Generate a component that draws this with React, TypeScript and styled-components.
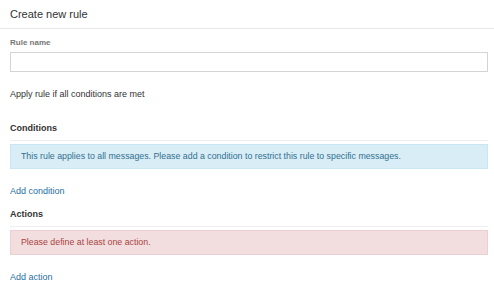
import * as React from "react";
import styled, { createGlobalStyle } from "styled-components";

const GlobalStyle = createGlobalStyle`
  html, body {
    margin: 0;
    padding: 0;
    background: #fff;
  }
  body {
    font-family: "Liberation Sans", Arial, sans-serif;
    color: #333;
  }
`;

const Page = styled.div`
  width: 494px;
  height: 298px;
  overflow: hidden;
`;

const Header = styled.div`
  height: 28px;
  line-height: 28px;
  padding: 0 10px;
  font-size: 11px;
  color: #333;
  border-bottom: 1px solid #e8e8e8;
`;

const Body = styled.div`
  padding: 0 6px 0 10px;
`;

const Label = styled.div`
  margin-top: 8px;
  font-size: 8px;
  line-height: 12px;
  font-weight: bold;
  color: #777;
`;

const Input = styled.input`
  display: block;
  box-sizing: border-box;
  width: 100%;
  height: 20px;
  margin: 3px 0 0;
  padding: 0 6px;
  border: 1px solid #d4d4d4;
  border-radius: 0;
  outline: none;
  font: inherit;
  font-size: 9px;
`;

const Text = styled.div`
  margin-top: 16px;
  font-size: 9px;
  line-height: 12px;
`;

const SectionTitle = styled.div<{ $top: number }>`
  margin-top: ${(p) => p.$top}px;
  padding-bottom: 6px;
  font-size: 9px;
  line-height: 12px;
  font-weight: bold;
  color: #333;
  border-bottom: 1px solid #eee;
`;

const Alert = styled.div<{ $kind: "info" | "danger" }>`
  margin-top: 3px;
  box-sizing: border-box;
  height: 25px;
  line-height: 23px;
  padding: 0 10px;
  font-size: 8.8px;
  border: 1px solid ${(p) => (p.$kind === "info" ? "#c9e7f2" : "#ebcfd2")};
  background: ${(p) => (p.$kind === "info" ? "#d9edf7" : "#f2dede")};
  color: ${(p) => (p.$kind === "info" ? "#31708f" : "#a94442")};
`;

const Link = styled.a`
  display: block;
  margin-top: 16px;
  font-size: 9px;
  line-height: 12px;
  color: #2a6fa3;
  text-decoration: none;
  cursor: pointer;
`;

export default function App() {
  return (
    <Page>
      <GlobalStyle />
      <Header>Create new rule</Header>
      <Body>
        <Label>Rule name</Label>
        <Input type="text" />
        <Text>Apply rule if all conditions are met</Text>

        <SectionTitle $top={22}>Conditions</SectionTitle>
        <Alert $kind="info">
          This rule applies to all messages. Please add a condition to restrict
          this rule to specific messages.
        </Alert>
        <Link>Add condition</Link>

        <SectionTitle $top={11}>Actions</SectionTitle>
        <Alert $kind="danger">Please define at least one action.</Alert>
        <Link>Add action</Link>
      </Body>
    </Page>
  );
}
